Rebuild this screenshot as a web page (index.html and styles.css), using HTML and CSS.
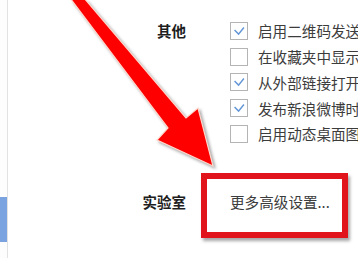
FILE: index.html
```html
<!DOCTYPE html>
<html lang="zh-CN">
<head>
<meta charset="utf-8">
<title>设置</title>
<link rel="stylesheet" href="styles.css">
</head>
<body>
<div class="page">
  <aside class="sidebar"><div class="sidebar-active"></div></aside>
  <main class="content">
    <section class="group">
      <div class="label">其他</div>
      <ul class="options">
        <li class="option"><span class="checkbox checked"><svg viewBox="0 0 18 18"><path d="M4 8 L8.5 12.5 L14.5 5"/></svg></span><span class="option-text">启用二维码发送</span></li>
        <li class="option"><span class="checkbox"></span><span class="option-text">在收藏夹中显示</span></li>
        <li class="option"><span class="checkbox checked"><svg viewBox="0 0 18 18"><path d="M4 8 L8.5 12.5 L14.5 5"/></svg></span><span class="option-text">从外部链接打开</span></li>
        <li class="option"><span class="checkbox checked"><svg viewBox="0 0 18 18"><path d="M4 8 L8.5 12.5 L14.5 5"/></svg></span><span class="option-text">发布新浪微博时</span></li>
        <li class="option"><span class="checkbox"></span><span class="option-text">启用动态桌面图</span></li>
      </ul>
    </section>
    <section class="group group-lab">
      <div class="label">实验室</div>
      <div class="options">
        <div class="option"><span class="option-text">更多高级设置...</span></div>
      </div>
    </section>
  </main>
  <svg class="arrow" viewBox="0 0 358 258" width="358" height="258">
    <polygon points="70,-2 84,-2 186,118 198,108 213,166 157,140 168,128"/>
  </svg>
  <div class="highlight"></div>
</div>
</body>
</html>
```

FILE: styles.css
```css
html, body {
  margin: 0;
  padding: 0;
  overflow: hidden;
  background: #ffffff;
}

.page {
  position: relative;
  display: flex;
  width: 358px;
  height: 258px;
  overflow: hidden;
  font-family: "Noto Sans CJK SC", "Noto Sans", sans-serif;
}

.sidebar {
  width: 7px;
  flex: none;
  border-right: 1px solid #e2e2e2;
  background: #fdfdfd;
}

.sidebar-active {
  margin-top: 197px;
  height: 45px;
  background: #7ba3e0;
}

.content {
  flex: 1;
  padding-top: 18px;
}

.group {
  display: grid;
  grid-template-columns: 178px 1fr;
  column-gap: 44px;
}

.group-lab {
  margin-top: 42px;
}

.label {
  text-align: right;
  font-weight: bold;
  font-size: 14.5px;
  line-height: 25.75px;
  color: #1e1e1e;
  white-space: nowrap;
}

.options {
  list-style: none;
  margin: 0;
  padding: 0;
}

.option {
  display: flex;
  align-items: center;
  gap: 10px;
  height: 25.75px;
  white-space: nowrap;
}

.checkbox {
  flex: none;
  width: 18px;
  height: 18px;
  box-sizing: border-box;
  border: 1px solid #b4b4b4;
  background: #ffffff;
  display: flex;
}

.checkbox svg {
  width: 16px;
  height: 16px;
}

.checkbox path {
  fill: none;
  stroke: #6396d6;
  stroke-width: 1.6;
}

.option-text {
  font-size: 14.6px;
  color: #3c3c3c;
}

.arrow {
  position: absolute;
  left: 0;
  top: 0;
  pointer-events: none;
  filter: drop-shadow(2px 2px 1.5px rgba(0, 0, 0, 0.35));
}

.arrow polygon {
  fill: #ff0000;
  stroke: #ffd8cc;
  stroke-width: 1.2;
  stroke-linejoin: miter;
}

.highlight {
  position: absolute;
  left: 201px;
  top: 173px;
  width: 147px;
  height: 65px;
  box-sizing: border-box;
  border: 6px solid #e2141b;
  box-shadow: 2px 3px 3px rgba(0, 0, 0, 0.35);
  pointer-events: none;
}
```
